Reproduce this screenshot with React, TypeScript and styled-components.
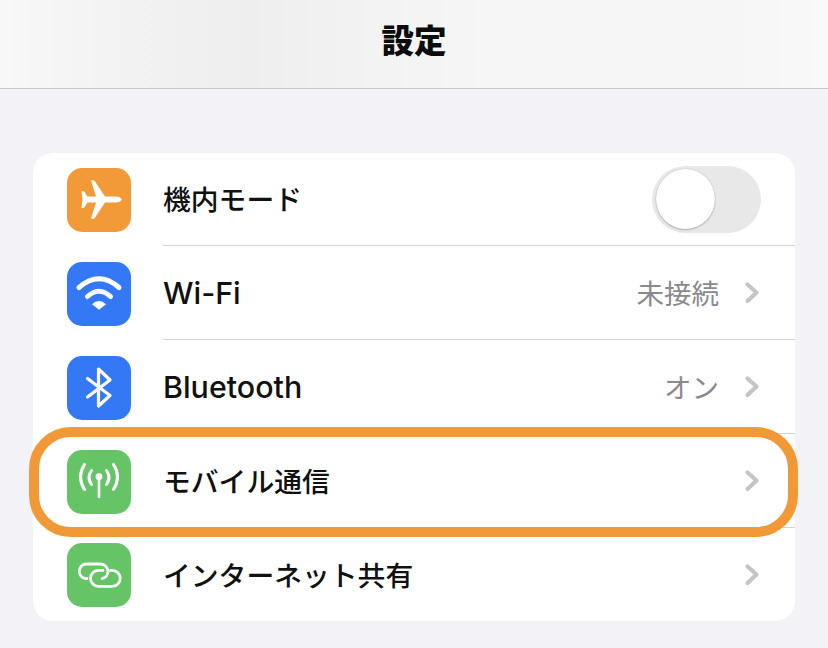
import { ReactNode } from "react";
import styled, { createGlobalStyle } from "styled-components";

const GlobalStyle = createGlobalStyle`
	html, body {
		margin: 0;
		padding: 0;
		background: #f2f2f7;
	}
	body {
		font-family: Inter, "Noto Sans CJK JP", sans-serif;
		color: #111;
	}
`;

const Page = styled.div`
	width: 828px;
	height: 648px;
	overflow: hidden;
	background: #f2f2f7;
`;

const Header = styled.header`
	height: 88px;
	display: flex;
	align-items: center;
	justify-content: center;
	box-sizing: content-box;
	border-bottom: 1px solid #c6c6c8;
	background: linear-gradient(90deg, #f8f8f8 0%, #f3f3f3 12%, #eeeeee 30%, #f2f2f2 42%, #f6f6f6 60%, #f6f6f6 88%, #f9f9f9 100%);
`;

const Title = styled.h1`
	margin: 0 0 3px;
	font-size: 32.5px;
	line-height: 1;
	font-weight: 900;
	color: #0c0c0c;
`;

const Main = styled.main`
	padding: 64px 33px 0;
`;

const Card = styled.section`
	background: #fff;
	border-radius: 20px;
`;

const Row = styled.div`
	position: relative;
	height: 94px;
	display: flex;
	align-items: stretch;
	padding-left: 34px;

	&:first-child,
	&:last-child {
		height: 93px;
	}
`;

const IconBox = styled.div<{ $color: string }>`
	flex: none;
	align-self: center;
	width: 64px;
	height: 64px;
	margin-top: 2px;
	border-radius: 15px;
	background: ${(p) => p.$color};

	${Row}:first-child &,
	${Row}:last-child & {
		margin-top: 1px;
	}

	svg {
		display: block;
	}
`;

const Body = styled.div<{ $last?: boolean }>`
	flex: 1;
	min-width: 0;
	margin-left: 32px;
	padding-right: 35px;
	display: flex;
	align-items: center;
	border-bottom: ${(p) => (p.$last ? "none" : "1px solid #d2d2d4")};
`;

const Label = styled.span<{ $latin?: boolean }>`
	flex: 1;
	font-size: ${(p) => (p.$latin ? "30.4px" : "27.8px")};
	font-weight: 500;
	line-height: 1;
	margin-top: ${(p) => (p.$latin ? "2px" : "4px")};
`;

const Value = styled.span`
	font-size: 27.5px;
	font-weight: 400;
	line-height: 1;
	margin-top: 4px;
	margin-right: 25px;
	color: #8a8a8e;
`;

const Chevron = styled.svg`
	display: block;
	flex: none;
	width: 16px;
	height: 24px;
`;

const Track = styled.div`
	width: 109px;
	height: 67px;
	margin-right: -1px;
	box-sizing: border-box;
	padding: 3px 4px;
	border-radius: 34px;
	background: #e8e8e9;
`;

const Knob = styled.div`
	width: 59px;
	height: 60px;
	border-radius: 50%;
	background: #fff;
	box-shadow: 0 1px 2px rgba(0, 0, 0, 0.22), 0 0 1px rgba(0, 0, 0, 0.25);
`;

const Highlight = styled.div`
	position: absolute;
	left: -4px;
	right: -3px;
	top: -7px;
	bottom: -9px;
	box-sizing: border-box;
	border: 10px solid #f29937;
	border-radius: 42px;
	pointer-events: none;
`;

const Glyph = ({ children }: { children: ReactNode }) => (
	<svg width="64" height="64" viewBox="0 0 64 64" fill="none" stroke="#fff" strokeLinecap="round" strokeLinejoin="round">
		{children}
	</svg>
);

const PlaneIcon = () => (
	<Glyph>
		<path
			stroke="none"
			fill="#fff"
			d="M54.5 31.5c0-1.8-3-3-6-3H38L27.6 12.8c-.5-.7-1.2-.8-3.6-.4L29 28.5H20.5l-3.2-5c-.4-.5-1.3-.7-2.8-.4l1 8.4-1 8.4c1.5.3 2.4.1 2.8-.4l3.2-5H29L24 50.6c2.4.4 3.1.3 3.6-.4L38 34.5h10.5c3 0 6-1.2 6-3z"
		/>
	</Glyph>
);

const WifiIcon = () => (
	<Glyph>
		<path strokeWidth="5" d="M12 25.5Q32 8 52 25.5" />
		<path strokeWidth="5" d="M20.5 34.5Q32 24 43.5 34.5" />
		<path stroke="none" fill="#fff" d="M25 42.2Q32 36 39 42.2L32 47.8z" />
	</Glyph>
);

const BluetoothIcon = () => (
	<Glyph>
		<path strokeWidth="3.2" d="M20.5 22.5L43 39.5 31.5 50V13L43 24 20.5 41" />
	</Glyph>
);

const AntennaIcon = () => (
	<Glyph>
		<circle cx="32" cy="26.7" r="3.4" fill="#fff" stroke="none" />
		<path strokeWidth="2.6" strokeLinecap="butt" d="M32 27V48" />
		<path strokeWidth="3" d="M17.5 14.5Q9.5 27 17.5 39.5" />
		<path strokeWidth="3" d="M46.5 14.5Q54.5 27 46.5 39.5" />
		<path strokeWidth="3" d="M24.5 20.5Q19.5 27.5 24.5 34.5" />
		<path strokeWidth="3" d="M39.5 20.5Q44.5 27.5 39.5 34.5" />
	</Glyph>
);

const LinkIcon = () => (
	<Glyph>
		<path strokeWidth="2.8" d="M20 35.6H18.5A7.4 7.4 0 0 1 18.5 21H33.5A7.4 7.4 0 0 1 41 28.4 7.4 7.4 0 0 1 35 35.6" />
		<path strokeWidth="2.8" d="M43.5 27.4H45.2A8 8 0 0 1 45.2 43.4H31.5A8 8 0 0 1 31.5 27.4H36" />
	</Glyph>
);

const ChevronIcon = () => (
	<Chevron viewBox="0 0 16 24" fill="none">
		<path d="M3.5 3.5L12.5 11.5 3.5 20" stroke="#c3c6c4" strokeWidth="4.2" strokeLinecap="round" strokeLinejoin="round" />
	</Chevron>
);

interface Setting {
	label: string;
	color: string;
	icon: ReactNode;
	latin?: boolean;
	value?: string;
	toggle?: boolean;
	highlighted?: boolean;
}

const settings: Setting[] = [
	{ label: "機内モード", color: "#f29a38", icon: <PlaneIcon />, toggle: true },
	{ label: "Wi-Fi", color: "#3478f6", icon: <WifiIcon />, value: "未接続", latin: true },
	{ label: "Bluetooth", color: "#3478f6", icon: <BluetoothIcon />, value: "オン", latin: true },
	{ label: "モバイル通信", color: "#65c466", icon: <AntennaIcon />, highlighted: true },
	{ label: "インターネット共有", color: "#65c466", icon: <LinkIcon /> },
];

function App() {
	return (
		<Page>
			<GlobalStyle />
			<Header>
				<Title>設定</Title>
			</Header>
			<Main>
				<Card>
					{settings.map((s, i) => (
						<Row key={s.label}>
							<IconBox $color={s.color}>{s.icon}</IconBox>
							<Body $last={i === settings.length - 1}>
								<Label $latin={s.latin}>{s.label}</Label>
								{s.value && <Value>{s.value}</Value>}
								{s.toggle ? (
									<Track>
										<Knob />
									</Track>
								) : (
									<ChevronIcon />
								)}
							</Body>
							{s.highlighted && <Highlight />}
						</Row>
					))}
				</Card>
			</Main>
		</Page>
	);
}

export default App;
